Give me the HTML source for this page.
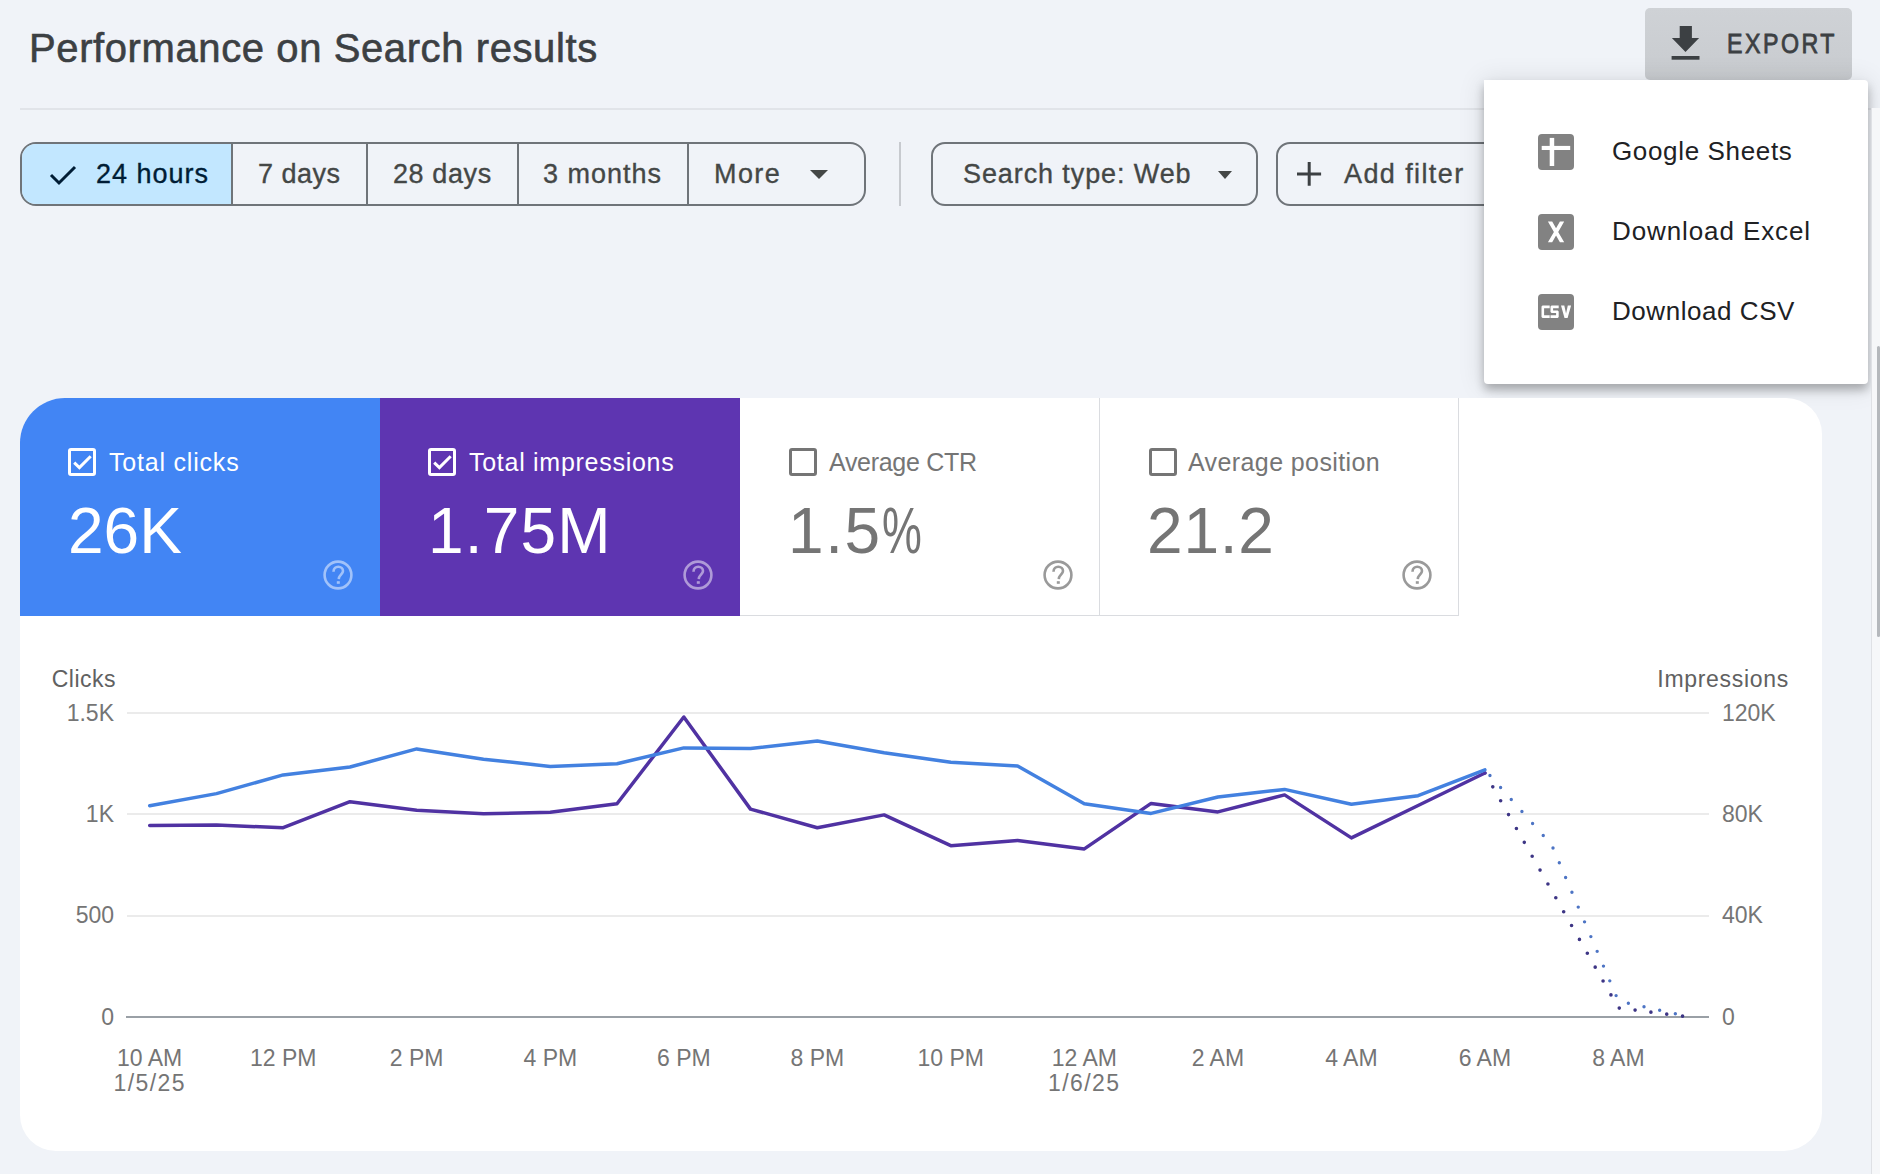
<!DOCTYPE html>
<html><head><meta charset="utf-8">
<style>
html,body{margin:0;padding:0}
body{width:1880px;height:1174px;overflow:hidden;background:#f0f3f8;position:relative;font-family:"Liberation Sans",sans-serif}
.a{position:absolute;white-space:nowrap}
#title{left:29px;top:25px;font-size:40px;color:#3c4043;line-height:46px;letter-spacing:0.6px;-webkit-text-stroke:0.6px #3c4043}
#hr{left:20px;top:108px;width:1860px;height:2px;background:#e1e4e9}
.grp{left:20px;top:142px;width:842px;height:60px;border:2px solid #6f7479;border-radius:16px;overflow:hidden}
.seg{position:absolute;top:0;height:60px;border-right:2px solid #6f7479;box-sizing:border-box}
.lbl{position:absolute;font-size:27px;line-height:30px;color:#444746;-webkit-text-stroke:0.35px currentColor}
.chip{top:142px;height:60px;border:2px solid #6f7479;border-radius:14px}
#exportbtn{left:1645px;top:8px;width:207px;height:72px;background:linear-gradient(#cfd2d6,#c8cbcf);border-radius:5px}
#menu{left:1484px;top:80px;width:384px;height:304px;background:#fff;border-radius:0 4px 4px 4px;box-shadow:0 6px 10px rgba(0,0,0,.26),0 2px 26px 2px rgba(0,0,0,.10)}
.mi{position:absolute;left:128px;font-size:26px;color:#202124;line-height:30px}
.ico{position:absolute;left:54px;width:36px;height:36px;background:#828282;border-radius:4px}
#card{left:20px;top:398px;width:1802px;height:753px;background:#fff;border-radius:45px 36px 38px 36px;overflow:hidden}
.tile{position:absolute;top:0;width:360px;height:218px;box-sizing:border-box}
.tl{position:absolute;left:89px;top:49px;font-size:25px;line-height:30px}
.tv{position:absolute;left:48px;top:98px;font-size:64px;line-height:70px}
.cb{position:absolute;left:48px;top:50px;width:22px;height:22px;border:3px solid;border-radius:3px}
.help{position:absolute;left:303px;top:162px}
.ax{font-size:23px;fill:#757575;font-family:"Liberation Sans",sans-serif}
</style></head><body>
<div id="title" class="a">Performance on Search results</div>
<div id="hr" class="a"></div>

<div class="a grp">
  <div class="seg" style="left:0;width:211px;background:#c2e7ff"></div>
  <div class="seg" style="left:211px;width:135px"></div>
  <div class="seg" style="left:346px;width:151px"></div>
  <div class="seg" style="left:497px;width:170px"></div>
  <svg style="position:absolute;left:27px;top:20px" width="28" height="22" viewBox="0 0 28 22"><path d="M2 11 L10 19 L26 3" fill="none" stroke="#001d35" stroke-width="3"/></svg>
  <div class="lbl" style="left:74px;top:15px;color:#001d35;letter-spacing:1px">24 hours</div>
  <div class="lbl" style="left:236px;top:15px;letter-spacing:0.5px">7 days</div>
  <div class="lbl" style="left:371px;top:15px;letter-spacing:0.6px">28 days</div>
  <div class="lbl" style="left:521px;top:15px;letter-spacing:1px">3 months</div>
  <div class="lbl" style="left:692px;top:15px;letter-spacing:1.4px">More</div>
  <svg style="position:absolute;left:788px;top:26px" width="18" height="9"><path d="M0 0 L18 0 L9 9Z" fill="#444746"/></svg>
</div>
<div class="a" style="left:899px;top:142px;width:2px;height:64px;background:#c7cacf"></div>
<div class="a chip" style="left:931px;width:323px">
  <div class="lbl" style="left:30px;top:15px;letter-spacing:0.9px">Search type: Web</div>
  <svg style="position:absolute;left:285px;top:27px" width="14" height="9"><path d="M0 0 L14 0 L7 8Z" fill="#444746"/></svg>
</div>
<div class="a chip" style="left:1276px;width:260px">
  <svg style="position:absolute;left:19px;top:18px" width="25" height="25"><path d="M12.2 0 V23.7 M0 12 H24.1" stroke="#3c4043" stroke-width="3"/></svg>
  <div class="lbl" style="left:66px;top:15px;letter-spacing:1.4px">Add filter</div>
</div>

<div id="exportbtn" class="a">
  <svg style="position:absolute;left:26px;top:18px" width="30" height="44"><path d="M8.7 0 H20.9 V12 H28.1 L14.5 25.9 L0.9 12 H8.7Z" fill="#3c4043"/><rect x="0.6" y="30" width="27.9" height="3.7" fill="#3c4043"/></svg>
  <div class="a" style="left:82px;top:19px;font-size:27px;line-height:34px;color:#3c4043;letter-spacing:2.9px;-webkit-text-stroke:0.8px #3c4043;transform:scaleX(0.86);transform-origin:0 0">EXPORT</div>
</div>

<div id="menu" class="a">
  <svg class="ico" style="top:54px" width="36" height="36"><rect x="11.7" y="3.9" width="4.5" height="28.1" fill="#fff"/><rect x="3.7" y="11.9" width="28.5" height="4.1" fill="#fff"/></svg>
  <div class="mi" style="top:56px;letter-spacing:0.65px">Google Sheets</div>
  <svg class="ico" style="top:134px" width="36" height="36"><path d="M9.9 7.6 H14.2 L18.05 14.2 L21.9 7.6 H26.2 L20.2 17.9 L26.2 28.2 H21.9 L18.05 21.6 L14.2 28.2 H9.9 L15.9 17.9 Z" fill="#fff"/></svg>
  <div class="mi" style="top:136px;letter-spacing:0.9px">Download Excel</div>
  <svg class="ico" style="top:214px" width="36" height="36"><path d="M4.5 11.6 H11.7 V14.2 H6.1 V21.3 H11.7 V23.9 H4.5 L3.5 22.9 V12.6 Z M13.5 11.6 H20.7 V14.2 H15.1 V16.5 H19.7 L20.7 17.5 V22.9 L19.7 23.9 H12.5 V21.3 H18.1 V19.1 H13.5 L12.5 18.1 V12.6 Z M23 11.6 H26.3 L28.05 19.6 L29.8 11.6 H33.1 L29.6 23.9 H26.5 Z" fill="#fff"/></svg>
  <div class="mi" style="top:216px;letter-spacing:0.55px">Download CSV</div>
</div>

<div id="card" class="a">
  <div class="tile" style="left:0;background:#4285f4;color:#fff">
    <div class="cb" style="border-color:#fff"><svg width="22" height="22" style="position:absolute;left:0;top:0"><path d="M3.2 11.6 L8.4 16.6 L19.7 5.2" fill="none" stroke="#fff" stroke-width="3"/></svg></div>
    <div class="tl" style="letter-spacing:0.8px">Total clicks</div>
    <div class="tv">26K</div>
    <svg class="help" width="30" height="30"><circle cx="15" cy="15" r="13.4" fill="none" stroke="rgba(255,255,255,.5)" stroke-width="2.6"/><path d="M10.5 11.8 C10.5 8.5 12.8 6.8 15.3 6.8 C18 6.8 20 8.7 20 11 C20 13.5 17.2 14.5 16 17.5 L15.8 19.1" fill="none" stroke="rgba(255,255,255,.5)" stroke-width="2.6"/><rect x="13.8" y="21.2" width="3" height="2.6" fill="rgba(255,255,255,.5)"/></svg>
  </div>
  <div class="tile" style="left:360px;background:#5e35b1;color:#fff">
    <div class="cb" style="border-color:#fff"><svg width="22" height="22" style="position:absolute;left:0;top:0"><path d="M3.2 11.6 L8.4 16.6 L19.7 5.2" fill="none" stroke="#fff" stroke-width="3"/></svg></div>
    <div class="tl" style="letter-spacing:0.72px">Total impressions</div>
    <div class="tv" style="letter-spacing:1.2px">1.75M</div>
    <svg class="help" width="30" height="30"><circle cx="15" cy="15" r="13.4" fill="none" stroke="rgba(255,255,255,.5)" stroke-width="2.6"/><path d="M10.5 11.8 C10.5 8.5 12.8 6.8 15.3 6.8 C18 6.8 20 8.7 20 11 C20 13.5 17.2 14.5 16 17.5 L15.8 19.1" fill="none" stroke="rgba(255,255,255,.5)" stroke-width="2.6"/><rect x="13.8" y="21.2" width="3" height="2.6" fill="rgba(255,255,255,.5)"/></svg>
  </div>
  <div class="tile" style="left:720px;color:#757575;border-right:1px solid #dadce0;border-bottom:1px solid #dadce0">
    <div class="cb" style="border-color:#757575;left:49px"></div>
    <div class="tl" style="letter-spacing:-0.3px">Average CTR</div>
    <div class="tv" style="letter-spacing:1.6px">1.5<span style="display:inline-block;transform:scaleX(0.7);transform-origin:0 0">%</span></div>
    <svg class="help" width="30" height="30"><circle cx="15" cy="15" r="13.4" fill="none" stroke="#9a9a9a" stroke-width="2.6"/><path d="M10.5 11.8 C10.5 8.5 12.8 6.8 15.3 6.8 C18 6.8 20 8.7 20 11 C20 13.5 17.2 14.5 16 17.5 L15.8 19.1" fill="none" stroke="#9a9a9a" stroke-width="2.6"/><rect x="13.8" y="21.2" width="3" height="2.6" fill="#9a9a9a"/></svg>
  </div>
  <div class="tile" style="left:1079px;color:#757575;border-right:1px solid #dadce0;border-bottom:1px solid #dadce0">
    <div class="cb" style="border-color:#757575;left:50px"></div>
    <div class="tl" style="letter-spacing:0.4px">Average position</div>
    <div class="tv" style="letter-spacing:0.8px">21.2</div>
    <svg class="help" width="30" height="30"><circle cx="15" cy="15" r="13.4" fill="none" stroke="#9a9a9a" stroke-width="2.6"/><path d="M10.5 11.8 C10.5 8.5 12.8 6.8 15.3 6.8 C18 6.8 20 8.7 20 11 C20 13.5 17.2 14.5 16 17.5 L15.8 19.1" fill="none" stroke="#9a9a9a" stroke-width="2.6"/><rect x="13.8" y="21.2" width="3" height="2.6" fill="#9a9a9a"/></svg>
  </div>
</div>

<svg class="a" style="left:0;top:0" width="1880" height="1174" id="chart">
<line x1="127" y1="713" x2="1709" y2="713" stroke="#ebebeb" stroke-width="2"/>
<line x1="127" y1="814" x2="1709" y2="814" stroke="#ebebeb" stroke-width="2"/>
<line x1="127" y1="916" x2="1709" y2="916" stroke="#ebebeb" stroke-width="2"/>
<line x1="126" y1="1017" x2="1709" y2="1017" stroke="#9aa0a6" stroke-width="2"/>
<polyline points="1484.9,773 1618.4,1008 1685.2,1016.5" fill="none" stroke="#3d3585" stroke-width="3.6" stroke-linecap="round" stroke-dasharray="0 15.95" stroke-dashoffset="0"/>
<polyline points="1484.9,769.8 1551.7,845 1618.4,1001 1685.2,1016" fill="none" stroke="#4d74c4" stroke-width="3.4" stroke-linecap="round" stroke-dasharray="0 16.05" stroke-dashoffset="-7.6"/>
<polyline points="149.7,825.5 216.5,825.1 283.2,827.7 350.0,801.7 416.7,810.2 483.5,813.8 550.3,812.3 617.0,803.8 683.8,717.0 750.5,809.1 817.3,827.7 884.1,814.9 950.8,845.7 1017.6,840.4 1084.3,848.9 1151.1,803.4 1217.9,811.9 1284.6,794.9 1351.4,837.9 1418.1,805.5 1484.9,773.0" fill="none" stroke="#5032a2" stroke-width="3.5" stroke-linejoin="round" stroke-linecap="round"/>
<polyline points="149.7,805.7 216.5,793.6 283.2,774.9 350.0,767.0 416.7,748.9 483.5,759.2 550.3,766.4 617.0,763.8 683.8,747.9 750.5,748.5 817.3,741.0 884.1,752.8 950.8,762.3 1017.6,766.0 1084.3,803.8 1151.1,813.4 1217.9,797.0 1284.6,789.4 1351.4,804.3 1418.1,795.7 1484.9,769.8" fill="none" stroke="#4381e0" stroke-width="3.5" stroke-linejoin="round" stroke-linecap="round"/>
<text class="ax" x="116" y="687" text-anchor="end" style="fill:#616161;letter-spacing:0.5px">Clicks</text>
<text class="ax" x="114" y="721" text-anchor="end">1.5K</text>
<text class="ax" x="114" y="822" text-anchor="end">1K</text>
<text class="ax" x="114" y="923" text-anchor="end">500</text>
<text class="ax" x="114" y="1025" text-anchor="end">0</text>
<text class="ax" x="1789" y="687" text-anchor="end" style="fill:#616161;letter-spacing:0.7px">Impressions</text>
<text class="ax" x="1722" y="721">120K</text>
<text class="ax" x="1722" y="822">80K</text>
<text class="ax" x="1722" y="923">40K</text>
<text class="ax" x="1722" y="1025">0</text>
<text class="ax" x="149.7" y="1066" text-anchor="middle">10 AM</text>
<text class="ax" x="283.2" y="1066" text-anchor="middle">12 PM</text>
<text class="ax" x="416.7" y="1066" text-anchor="middle">2 PM</text>
<text class="ax" x="550.3" y="1066" text-anchor="middle">4 PM</text>
<text class="ax" x="683.8" y="1066" text-anchor="middle">6 PM</text>
<text class="ax" x="817.3" y="1066" text-anchor="middle">8 PM</text>
<text class="ax" x="950.8" y="1066" text-anchor="middle">10 PM</text>
<text class="ax" x="1084.3" y="1066" text-anchor="middle">12 AM</text>
<text class="ax" x="1217.9" y="1066" text-anchor="middle">2 AM</text>
<text class="ax" x="1351.4" y="1066" text-anchor="middle">4 AM</text>
<text class="ax" x="1484.9" y="1066" text-anchor="middle">6 AM</text>
<text class="ax" x="1618.4" y="1066" text-anchor="middle">8 AM</text>
<text class="ax" x="149.7" y="1091" text-anchor="middle" style="letter-spacing:1.4px">1/5/25</text>
<text class="ax" x="1084.3" y="1091" text-anchor="middle" style="letter-spacing:1.4px">1/6/25</text>
</svg>

<div class="a" style="left:1871px;top:108px;width:1px;height:1066px;background:#dfe1e5"></div>
<div class="a" style="left:1872px;top:108px;width:8px;height:1066px;background:#f6f7f9"></div>
<div class="a" style="left:1877px;top:346px;width:3px;height:291px;background:#b5b8bc;border-radius:2px"></div>
</body></html>
